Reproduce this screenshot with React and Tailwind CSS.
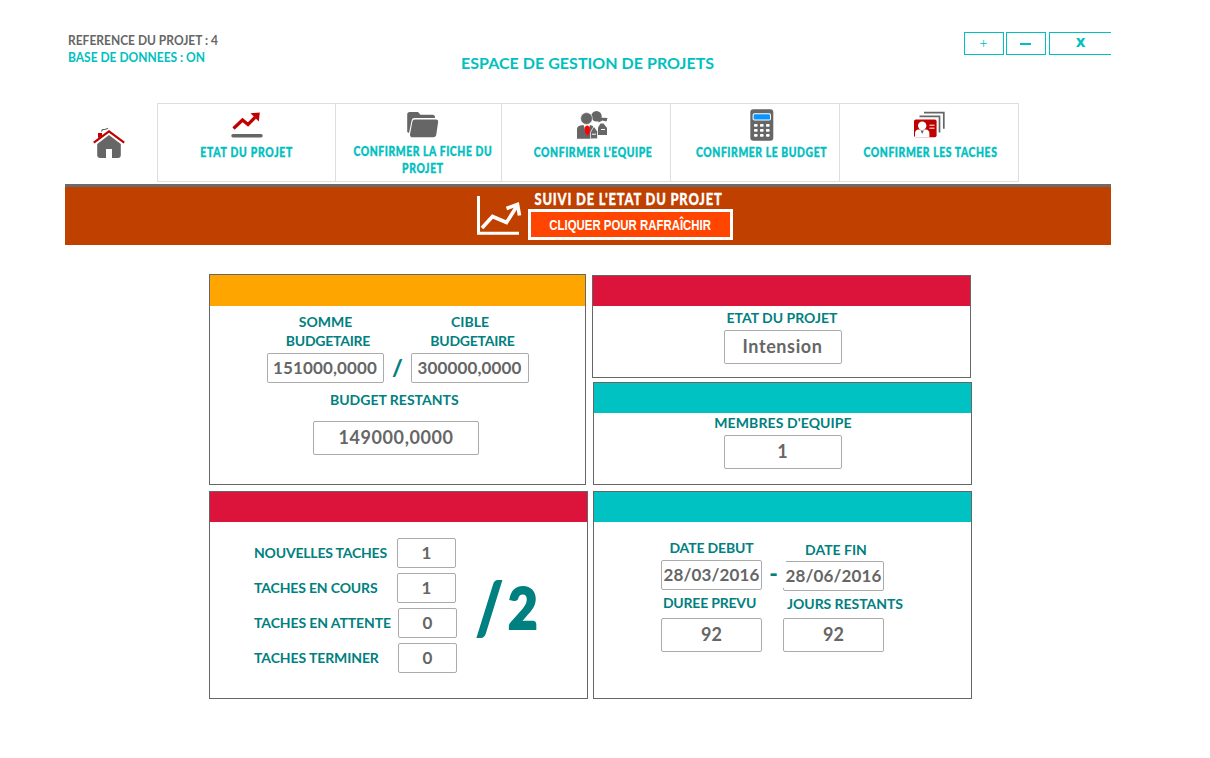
import React from "react";

const HomeIcon = () => (
  <svg width="34" height="34" viewBox="0 0 34 34" fill="none">
    <path d="M9.500 4.500 10.500 2.500H13L16 1.200" stroke="#666" strokeWidth="1.200" />
    <path d="M6 11V6h4v3z" fill="#c00000" />
    <path d="M17 8 28.800 17V28a3 3 0 0 1-3 3H20v-9h-6v9H8.200a3 3 0 0 1-3-3V17z" fill="#666" />
    <path d="M1.800 15.700 17 4.400 32.200 15.700" stroke="#c00000" strokeWidth="2.200" />
  </svg>
);

const TrendIcon = () => (
  <svg width="34" height="28" viewBox="0 0 34 28" fill="none">
    <path d="M3.500 17.500 12.500 9l5.500 4.500L25 6.500" stroke="#c00000" strokeWidth="3.200" />
    <path d="M20.500 2.200 29.800 1.600 28.800 10.500z" fill="#c00000" />
    <path d="M3 24.700h28" stroke="#666" strokeWidth="3.400" strokeLinecap="round" />
  </svg>
);

const FolderIcon = () => (
  <svg width="34" height="28" viewBox="0 0 34 28">
    <path d="M1.200 21V3.500A2.500 2.500 0 0 1 3.700 1H12l2.500 2.800h12A2.500 2.500 0 0 1 29 6.300v.8H8.500A3 3 0 0 0 5.600 9.500L3 22z" fill="#666" />
    <path d="M8.800 8.600h21a2.300 2.300 0 0 1 2.300 2.700L30.300 23.500a3.200 3.200 0 0 1-3.100 2.800H6.500a2.500 2.500 0 0 1-2.500-3L6.400 10.500a2.400 2.400 0 0 1 2.400-1.900z" fill="#666" />
  </svg>
);

const TeamIcon = () => (
  <svg width="34" height="30" viewBox="0 0 34 30">
    <circle cx="20.500" cy="6.200" r="5.200" fill="#666" />
    <path d="M22 7.500l9.500 0.500-1 3.500-4-1-4 2z" fill="#666" />
    <circle cx="10.500" cy="8.500" r="5.900" fill="#666" stroke="#fff" strokeWidth="0.600" />
    <path d="M1 28.800V19.500a4 4 0 0 1 3.500-4l3-.5 3.500 10 3-10 3 1v12.800z" fill="#666" />
    <path d="m8.700 17 2.500-1.700 2.500 1.700-.1 5.500-2.400 3.500-2-3.500z" fill="#f00" />
    <path d="M14.500 28.800v-6.500l3-5.300h1l3 4.500v7.300z" fill="#666" stroke="#fff" strokeWidth="0.700" />
    <path d="M22 25v-7.500l2.500-4h3l3.500 4.500V25z" fill="#666" />
    <path d="M16 24.200h4M25 19.500h4" stroke="#fff" strokeWidth="1" />
  </svg>
);

const CalculatorIcon = () => (
  <svg width="26" height="34" viewBox="0 0 26 34">
    <rect x="1.300" y="1.200" width="23" height="31.500" rx="3" fill="#666" />
    <rect x="3.600" y="5.200" width="18.400" height="7.400" rx="1.800" fill="#fff" />
    <rect x="4.600" y="6.200" width="16.400" height="5.400" rx="1.200" fill="#0a94ff" />
    {[16, 21, 26].map((y) => [5, 11, 17].map((x) => (
      <rect key={`${x}-${y}`} x={x} y={y} width="3.600" height="2.800" rx="0.800" fill="#fff" />
    )))}
  </svg>
);

const CardsIcon = () => (
  <svg width="34" height="28" viewBox="0 0 34 28" fill="none">
    <path d="M11 1.700h19.800v16M6.500 5.400h20v16" stroke="#666" strokeWidth="1.700" />
    <rect x="1" y="8.500" width="22.600" height="17.800" rx="1.800" fill="#c00000" />
    <path d="M2 26.300v-3.800a4 4 0 0 1 3.700-4h7a4 4 0 0 1 3.700 4v3.800z" fill="#fff" />
    <circle cx="9.200" cy="14.800" r="4.200" fill="#fff" />
    <path d="m7.500 19.500 1.700 3.500 1.700-3.500z" fill="#666" />
    <path d="M16.500 14.200h5M16.500 17.200h5" stroke="#fff" strokeWidth="1" />
  </svg>
);

const ChartIcon = () => (
  <svg width="46" height="42" viewBox="0 0 46 42" fill="none" stroke="#fff">
    <path d="M2.500 1v37.300H43" strokeWidth="3" />
    <path d="M6 33 16.500 21.500 30.500 27.500 41 11" strokeWidth="3.600" />
    <path d="M30.500 13.500 41.500 9.500 43.500 20.500" strokeWidth="3.600" />
  </svg>
);

const NavItem = ({ className, icon, children }) => (
  <div className={`flex h-full shrink-0 flex-col items-center border-r border-[#dedede] ${className}`}>
    <div className="flex h-[38px] w-full shrink-0 items-center justify-center pt-[3px]">{icon}</div>
    <div className="origin-center scale-x-[0.74] text-center text-[14px] leading-[17px] font-black tracking-[0.8px] whitespace-nowrap text-[#00c0c0] [-webkit-text-stroke:0.4px_#00c0c0]">
      {children}
    </div>
  </div>
);

const Label = ({ className = "", children }) => (
  <div className={`text-[14px] leading-[19px] font-bold whitespace-nowrap text-[#008080] ${className}`}>{children}</div>
);

const Field = ({ className = "", children }) => (
  <div className={`flex shrink-0 items-center justify-center rounded-[2px] border border-[#ababab] font-bold whitespace-nowrap text-[#666] ${className}`}>
    {children}
  </div>
);

const Card = ({ className, bar, children }) => (
  <section className={`flex shrink-0 flex-col border border-[#666] bg-white ${className}`}>
    <div className={`w-full shrink-0 ${bar}`} />
    {children}
  </section>
);

const TaskRow = ({ label, value, fieldClass = "", labelClass = "" }) => (
  <div className="flex h-[30px] items-center">
    <Label className={`w-[143px] pb-0.5 ${labelClass}`}>{label}</Label>
    <Field className={`h-[30px] w-[59px] text-[17px] ${fieldClass}`}>{value}</Field>
  </div>
);

export default function App() {
  return (
    <div className="h-[758px] w-[1210px] overflow-hidden bg-white font-['Lato',sans-serif]">
      <header className="flex h-[103px] items-start pt-8 pl-[68px]">
        <div className="w-[393px] origin-left scale-x-[0.923] text-[13px] leading-[17px] font-bold">
          <div className="text-[#666]">REFERENCE DU PROJET : 4</div>
          <div className="text-[#00c0c0]">BASE DE DONNEES : ON</div>
        </div>
        <h1 className="w-[503px] pt-[21px] text-[16px] leading-5 font-bold tracking-[0.04px] whitespace-nowrap text-[#00c0c0]">
          ESPACE DE GESTION DE PROJETS
        </h1>
        <div className="flex text-[#00c0c0]">
          <button className="mr-0.5 flex h-[23px] w-10 items-center justify-center border border-[#00c0c0] pr-px font-['Liberation_Serif',serif] text-[14px]">+</button>
          <button className="mr-[3px] flex h-[23px] w-10 items-center justify-center border border-[#00c0c0] pr-0.5">
            <span className="mt-px h-0.5 w-[11px] bg-[#00c0c0]" />
          </button>
          <button className="flex h-[23px] w-[62px] items-center justify-center border border-r-0 border-[#00c0c0] pb-[3px] font-['DejaVu_Sans',sans-serif] text-[15px] font-bold">x</button>
        </div>
      </header>

      <nav className="flex h-[81px] pl-[65px]">
        <div className="w-[92px] pt-6 pl-[27px]"><HomeIcon /></div>
        <div className="flex h-[79px] border-y border-l border-[#dedede]">
          <NavItem className="w-[178px]" icon={<TrendIcon />}><div className="pt-px tracking-[1px]">ETAT DU PROJET</div></NavItem>
          <NavItem className="w-[166px] pl-[9px]" icon={<FolderIcon />}>CONFIRMER LA FICHE DU<br />PROJET</NavItem>
          <NavItem className="w-[169px] pl-[14px]" icon={<TeamIcon />}><div className="pt-px">CONFIRMER L'EQUIPE</div></NavItem>
          <NavItem className="w-[169px] pl-[13px]" icon={<CalculatorIcon />}><div className="pt-px">CONFIRMER LE BUDGET</div></NavItem>
          <NavItem className="w-[179px] pl-0.5" icon={<CardsIcon />}><div className="pt-px">CONFIRMER LES TACHES</div></NavItem>
        </div>
      </nav>

      <div className="ml-[65px] flex h-[61px] w-[1046px] border-t-[3px] border-[#6b6b6b] bg-[#c04000] pl-[411px]">
        <div className="w-[52px] pt-2"><ChartIcon /></div>
        <div className="flex w-[205px] flex-col items-center pt-0.5">
          <div className="mr-[4px] h-5 scale-x-[0.807] text-[16px] leading-5 font-black tracking-[1px] whitespace-nowrap text-white [-webkit-text-stroke:0.3px_#fff]">
            SUIVI DE L'ETAT DU PROJET
          </div>
          <button className="flex h-[31px] w-[205px] shrink-0 items-center justify-center border-[3px] border-white bg-[#ff4500] pt-0.5 pr-px font-['Liberation_Sans',sans-serif] text-[14px] font-bold whitespace-nowrap text-white">
            <span className="scale-x-[0.815]">CLIQUER POUR RAFRAÎCHIR</span>
          </button>
        </div>
      </div>

      <main className="pt-[29px] pl-[209px]">
        <div className="flex gap-1.5">
          <Card className="h-[211px] w-[377px]" bar="h-[31px] bg-[#ffa500]">
            <div className="flex pt-[6px] pl-[57px]">
              <div className="flex w-[117px] flex-col items-center">
                <Label>SOMME</Label>
                <Label className="pl-[5px] tracking-[-0.25px]">BUDGETAIRE</Label>
                <Field className="mt-[3px] h-[30px] w-[117px] pr-px text-[17px] tracking-[0.15px]">151000,0000</Field>
              </div>
              <div className="w-[27px] pt-[39px] text-center text-[23px] leading-8 font-black text-[#008080]">/</div>
              <div className="flex w-[118px] flex-col items-center">
                <Label>CIBLE</Label>
                <Label className="pl-[5px] tracking-[-0.25px]">BUDGETAIRE</Label>
                <Field className="mt-[3px] h-[30px] w-[118px] pr-px text-[17px] tracking-[0.15px]">300000,0000</Field>
              </div>
            </div>
            <Label className="mt-[7px] pl-[120px]">BUDGET RESTANTS</Label>
            <Field className="mt-[12px] ml-[103px] h-[34px] w-[166px] pb-px text-[18px] tracking-[0.6px]">149000,0000</Field>
          </Card>
          <div className="flex flex-col pt-px">
            <Card className="h-[103px] w-[379px] items-center" bar="h-[30px] bg-[#dc143c]">
              <Label className="mt-[2px] ml-px">ETAT DU PROJET</Label>
              <Field className="mt-[3px] mr-[-2px] h-[34px] w-[118px] pb-0.5 text-[18px] tracking-[0.6px]">Intension</Field>
            </Card>
            <Card className="mt-1 ml-px h-[103px] w-[379px] items-center" bar="h-[30px] bg-[#00c2c2]">
              <Label className="ml-px tracking-[0.1px]">MEMBRES D'EQUIPE</Label>
              <Field className="mt-[3px] h-[34px] w-[118px] pb-px text-[18px]">1</Field>
            </Card>
          </div>
        </div>

        <div className="mt-1.5 flex gap-[5px]">
          <Card className="h-[208px] w-[379px]" bar="h-[30px] bg-[#dc143c]">
            <div className="flex pt-4 pl-11">
              <div className="flex w-[221px] flex-col gap-[5px]">
                <TaskRow label="NOUVELLES TACHES" value="1" labelClass="tracking-[-0.2px]" />
                <TaskRow label="TACHES EN COURS" value="1" labelClass="tracking-[-0.15px]" />
                <TaskRow label="TACHES EN ATTENTE" value="0" labelClass="tracking-[-0.1px]" fieldClass="ml-px" />
                <TaskRow label="TACHES TERMINER" value="0" labelClass="tracking-[-0.1px]" fieldClass="ml-px" />
              </div>
              <div className="flex pt-[33px] pl-px leading-[72px] font-black text-[#008080] [-webkit-text-stroke:2px_#008080]">
                <span className="w-8 origin-left scale-x-[0.8] text-[71px]">/</span>
                <span className="origin-left scale-x-[0.88] text-[58px]">2</span>
              </div>
            </div>
          </Card>
          <Card className="h-[208px] w-[379px]" bar="h-[30px] bg-[#00c2c2]">
            <div className="flex pt-4 pl-[67px]">
              <div className="flex w-[101px] flex-col items-center">
                <Label className="tracking-[-0.15px]">DATE DEBUT</Label>
                <Field className="mt-[3px] h-[30px] w-[101px] text-[17px] tracking-[0.15px]">28/03/2016</Field>
                <Label className="mt-[3px] mr-1 tracking-[-0.2px]">DUREE PREVU</Label>
                <Field className="mt-[6px] h-[34px] w-[101px] pb-px text-[18px]">92</Field>
              </div>
              <div className="w-[21px] pt-[21px] pl-0.5 text-center text-[23px] leading-7 font-black text-[#008080]">-</div>
              <div className="flex w-[101px] flex-col items-center pt-0.5">
                <Label className="ml-[5px]">DATE FIN</Label>
                <div className="relative mt-0.5">
                  <Field className="h-[30px] w-[101px] text-[17px] tracking-[0.15px]">28/06/2016</Field>
                  <span className="absolute top-0 left-0 h-[27px] w-[3px] bg-white" />
                </div>
                <Label className="mt-[3px] ml-[23px] tracking-[-0.05px]">JOURS RESTANTS</Label>
                <Field className="mt-[5px] h-[34px] w-[101px] pb-px text-[18px]">92</Field>
              </div>
            </div>
          </Card>
        </div>
      </main>
    </div>
  );
}
